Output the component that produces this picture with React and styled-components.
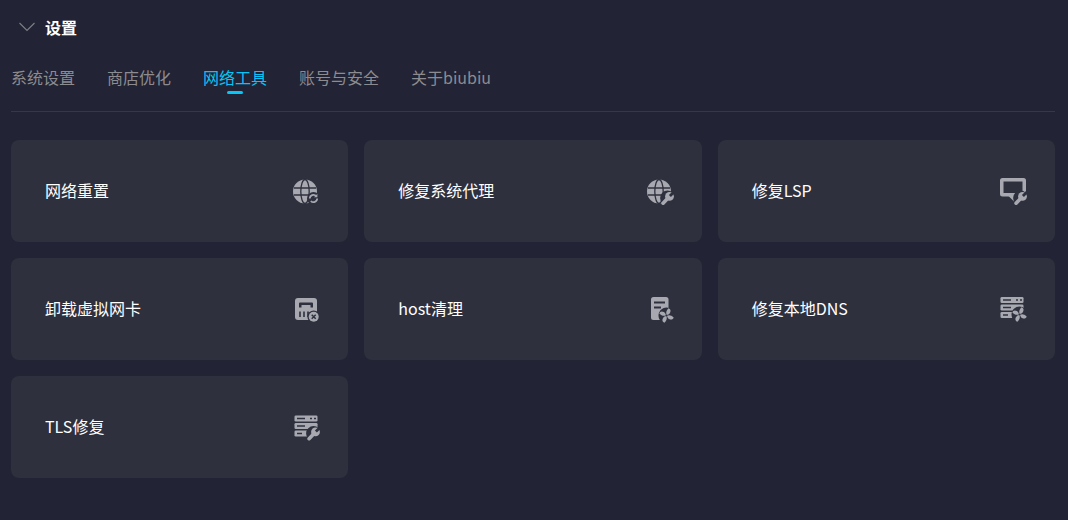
import React from "react";
import styled, { createGlobalStyle } from "styled-components";

const Global = createGlobalStyle`
  html, body {
    margin: 0;
    background: #222334;
    font-family: "Noto Sans CJK SC", "Liberation Sans", sans-serif;
  }
`;

const Page = styled.div`
  width: 1068px;
  height: 520px;
  overflow: hidden;
  padding: 0 13px 0 11px;
  box-sizing: border-box;
`;

const Header = styled.div`
  height: 54px;
  display: flex;
  align-items: center;
  gap: 10px;
  padding-left: 8px;
  color: #fff;
  font-size: 16px;
  font-weight: 700;
`;

const Tabs = styled.div`
  display: flex;
  gap: 32px;
  height: 57px;
  border-bottom: 1px solid #363847;
`;

const Tab = styled.div`
  position: relative;
  height: 46px;
  line-height: 46px;
  font-size: 16px;
  color: ${(p) => (p.$active ? "#06c6f8" : "#8c8c90")};
  &::after {
    content: "";
    display: ${(p) => (p.$active ? "block" : "none")};
    position: absolute;
    left: 50%;
    margin-left: -8px;
    bottom: 6px;
    width: 16px;
    height: 3px;
    border-radius: 2px;
    background: #06c6f8;
  }
`;

const Grid = styled.div`
  display: grid;
  grid-template-columns: repeat(3, 1fr);
  grid-auto-rows: 102px;
  gap: 16px;
  margin-top: 28px;
`;

const Card = styled.div`
  display: flex;
  align-items: center;
  justify-content: space-between;
  padding: 0 28px 0 34px;
  border-radius: 8px;
  background: #2e303e;
  color: #fff;
  font-size: 16px;
`;

const Label = styled.span`
  margin-bottom: 2px;
`;

const IconSvg = styled.svg`
  width: 28px;
  height: 28px;
  fill: #a8a9b0;
  flex: none;
`;

const BG = "#2e303e";
const FG = "#a8a9b0";

// small overlay badges shared by the icons
const Wrench = ({ x, y }) => (
  <g transform={`translate(${x} ${y})`}>
    <circle r="7.4" fill={BG} />
    <path d="M-4.4 5.2 L1.5 -1" stroke={FG} strokeWidth="3.6" strokeLinecap="round" fill="none" />
    <circle cx="2" cy="-1.6" r="4.4" />
    <path d="M2.4 -2 L7 -6.6" stroke={BG} strokeWidth="2.8" fill="none" />
  </g>
);

const Fan = ({ x, y }) => (
  <g transform={`translate(${x} ${y}) rotate(20)`}>
    <circle r="8" fill={BG} />
    <path d="M0 -0.6 C-1.6 -2 -2 -4.6 -0.6 -7.4 C1.6 -7.6 2.8 -6 2.4 -3.6 C2.2 -2.2 1 -1.2 0 -0.6 Z" />
    <path d="M0.6 0 C2 -1.6 4.6 -2 7.4 -0.6 C7.6 1.6 6 2.8 3.6 2.4 C2.2 2.2 1.2 1 0.6 0 Z" />
    <path d="M0 0.6 C1.6 2 2 4.6 0.6 7.4 C-1.6 7.6 -2.8 6 -2.4 3.6 C-2.2 2.2 -1 1.2 0 0.6 Z" />
    <path d="M-0.6 0 C-2 1.6 -4.6 2 -7.4 0.6 C-7.6 -1.6 -6 -2.8 -3.6 -2.4 C-2.2 -2.2 -1.2 -1 -0.6 0 Z" />
  </g>
);

const Globe = () => (
  <>
    <circle cx="13" cy="14.5" r="12" />
    <g fill="none" stroke={BG} strokeWidth="1.3">
      <ellipse cx="13" cy="14.5" rx="4.2" ry="12" />
      <path d="M2 11 H24 M2 18 H24" />
    </g>
  </>
);

const GlobeRefresh = () => (
  <IconSvg viewBox="0 0 28 28">
    <Globe />
    <circle cx="21.5" cy="21.5" r="6.5" fill={BG} />
    <path d="M17.8 21.5 a3.7 3.7 0 0 1 6.4 -2.5 M25.2 21.5 a3.7 3.7 0 0 1 -6.4 2.5" fill="none" stroke={FG} strokeWidth="1.7" />
    <path d="M25.4 16.8 V20.2 H22 Z" />
  </IconSvg>
);

const GlobeWrench = () => (
  <IconSvg viewBox="0 0 28 28">
    <Globe />
    <Wrench x={21.5} y={21} />
  </IconSvg>
);

const MonitorWrench = () => (
  <IconSvg viewBox="0 0 28 28">
    <path
      fillRule="evenodd"
      d="M3.5 1 H24.5 A2.5 2.5 0 0 1 27 3.5 V17 A2.5 2.5 0 0 1 24.5 19.5 H3.5 A2.5 2.5 0 0 1 1 17 V3.5 A2.5 2.5 0 0 1 3.5 1 Z M4.5 4.5 V16 H23.5 V4.5 Z"
    />
    <path d="M9.5 19 H16.5 V26 Z" />
    <Wrench x={21.5} y={21} />
  </IconSvg>
);

const CardClose = () => (
  <IconSvg viewBox="0 0 28 28">
    <rect x="3" y="3" width="22" height="22" rx="3" />
    <path d="M7 12.5 V8.5 A1 1 0 0 1 8 7.5 H20 A1 1 0 0 1 21 8.5 V12.5 H18.5 V10 H9.5 V12.5 Z" fill={BG} />
    <path d="M8 16.5 V22 M12 16.5 V22 M16 16.5 V22" stroke={BG} strokeWidth="1.6" />
    <circle cx="21.7" cy="21.7" r="6.3" fill={BG} />
    <circle cx="21.7" cy="21.7" r="5" />
    <path d="M19.7 19.7 L23.7 23.7 M23.7 19.7 L19.7 23.7" stroke={BG} strokeWidth="1.5" />
  </IconSvg>
);

const DocFan = () => (
  <IconSvg viewBox="0 0 28 28">
    <path d="M7.5 2 H20 A2.5 2.5 0 0 1 22.5 4.5 V25 H7.5 A2.5 2.5 0 0 1 5 22.5 V4.5 A2.5 2.5 0 0 1 7.5 2 Z" />
    <path d="M8 7.5 H19 M8 12.5 H15" stroke={BG} strokeWidth="2" />
    <Fan x={20.5} y={20.5} />
  </IconSvg>
);

const ServerRows = ({ left, top }) => (
  <g transform={`translate(${left} ${top})`}>
    <rect x="1.5" y="0" width="23" height="6" rx="1.3" />
    <rect x="1.5" y="7.5" width="23" height="6" rx="1.3" />
    <rect x="1.5" y="15" width="23" height="6" rx="1.3" />
    <path d="M4 3 H12 M4 10.5 H12 M4 18 H9" stroke={BG} strokeWidth="1.5" />
    <path d="M17 3 H19 M21 3 H23" stroke={BG} strokeWidth="1.5" />
  </g>
);

const ServerFan = () => (
  <IconSvg viewBox="0 0 28 28">
    <ServerRows left={0} top={2} />
    <Fan x={20.5} y={19.5} />
  </IconSvg>
);

const ServerWrench = () => (
  <IconSvg viewBox="0 0 28 28">
    <ServerRows left={1} top={2.5} />
    <Wrench x={21.5} y={20.5} />
  </IconSvg>
);

const tabs = ["系统设置", "商店优化", "网络工具", "账号与安全", "关于biubiu"];

const tools = [
  { name: "网络重置", Icon: GlobeRefresh },
  { name: "修复系统代理", Icon: GlobeWrench },
  { name: "修复LSP", Icon: MonitorWrench },
  { name: "卸载虚拟网卡", Icon: CardClose },
  { name: "host清理", Icon: DocFan },
  { name: "修复本地DNS", Icon: ServerFan },
  { name: "TLS修复", Icon: ServerWrench },
];

export default function App() {
  return (
    <Page>
      <Global />
      <Header>
        <svg width="16" height="10" viewBox="0 0 16 10" fill="none" stroke="#7b7c86" strokeWidth="1.2">
          <path d="M0.5 1 L8 8.5 L15.5 1" />
        </svg>
        设置
      </Header>
      <Tabs>
        {tabs.map((t) => (
          <Tab key={t} $active={t === "网络工具"}>
            {t}
          </Tab>
        ))}
      </Tabs>
      <Grid>
        {tools.map(({ name, Icon }) => (
          <Card key={name}>
            <Label>{name}</Label>
            <Icon />
          </Card>
        ))}
      </Grid>
    </Page>
  );
}
